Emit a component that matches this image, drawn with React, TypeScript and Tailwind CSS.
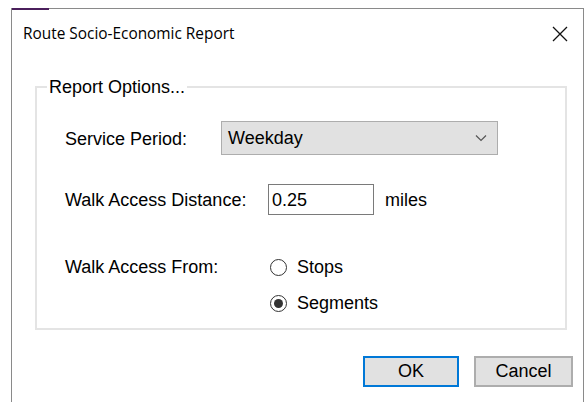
import React from "react";

const sans = { fontFamily: '"Liberation Sans", Arial, sans-serif' };
const ui = { fontFamily: '"Open Sans", "Noto Sans", sans-serif' };

function Radio({ checked, label }: { checked?: boolean; label: string }) {
  return (
    <div className="flex items-center h-[20px]">
      <span className="w-[17px] h-[17px] rounded-full border border-[#333] bg-white flex items-center justify-center">
        {checked && <span className="w-[9px] h-[9px] rounded-full bg-[#333]" />}
      </span>
      <span className="ml-[10px] text-[18px] text-black">{label}</span>
    </div>
  );
}

export default function App() {
  return (
    <div className="w-[588px] h-[402px] bg-white overflow-hidden" style={sans}>
      <div className="ml-[11px] mt-[8px] w-[573px] h-[394px] border-t border-x border-[#8a8a8a] flex flex-col relative">
        <div className="absolute left-0 top-[-1px] w-[37px] h-[2px] bg-[#4b1f5c]" />
        {/* title bar */}
        <div className="h-[49px] flex items-center justify-between pl-[11px] pr-[15px]">
          <span className="text-[15.4px] text-black pt-[1px]" style={ui}>
            Route Socio-Economic Report
          </span>
          <svg width="16" height="16" viewBox="0 0 16 16" className="mt-[1px]">
            <path d="M1 1 L15 15 M15 1 L1 15" stroke="#111" strokeWidth="1.3" />
          </svg>
        </div>

        {/* group box */}
        <div className="ml-[23px] mt-[28px] w-[532px] h-[244px] border-2 border-[#e4e4e4] relative pl-[28px] pt-[33px]">
          <span className="absolute left-[10px] top-[-11px] bg-white px-[2px] text-[18px] leading-[20px] text-black">
            Report Options...
          </span>

          <div className="flex items-center h-[34px]">
            <span className="w-[156px] text-[18px] text-black pt-[2px]">Service Period:</span>
            <div className="w-[277px] h-[34px] bg-[#e1e1e1] border border-[#adadad] flex items-center justify-between pl-[6px] pr-[10px]">
              <span className="text-[18px] text-black pt-[1px]">Weekday</span>
              <svg width="12" height="8" viewBox="0 0 12 8">
                <path d="M1 1.5 L6 6.5 L11 1.5" stroke="#555" strokeWidth="1.2" fill="none" />
              </svg>
            </div>
          </div>

          <div className="flex items-center h-[31px] mt-[29px]">
            <span className="w-[203px] text-[18px] text-black pt-[2px]">Walk Access Distance:</span>
            <div className="w-[106px] h-[31px] border border-[#7a7a7a] bg-white flex items-center pl-[3px]">
              <span className="text-[18px] text-black pt-[1px]">0.25</span>
            </div>
            <span className="ml-[11px] text-[18px] text-black pt-[1px]">miles</span>
          </div>

          <div className="flex mt-[42px]">
            <span className="w-[205px] text-[18px] text-black leading-[20px]">Walk Access From:</span>
            <div className="flex flex-col gap-[16px]">
              <Radio label="Stops" />
              <Radio checked label="Segments" />
            </div>
          </div>
        </div>

        {/* buttons */}
        <div className="flex justify-end gap-[15px] mt-[26px] pr-[10px]">
          <div className="w-[96px] h-[31px] border-2 border-[#0078d7] bg-[#e1e1e1] flex items-center justify-center text-[18px] text-black">
            OK
          </div>
          <div className="w-[99px] h-[31px] border-2 border-[#adadad] bg-[#e1e1e1] flex items-center justify-center text-[18px] text-black">
            Cancel
          </div>
        </div>
      </div>
    </div>
  );
}
